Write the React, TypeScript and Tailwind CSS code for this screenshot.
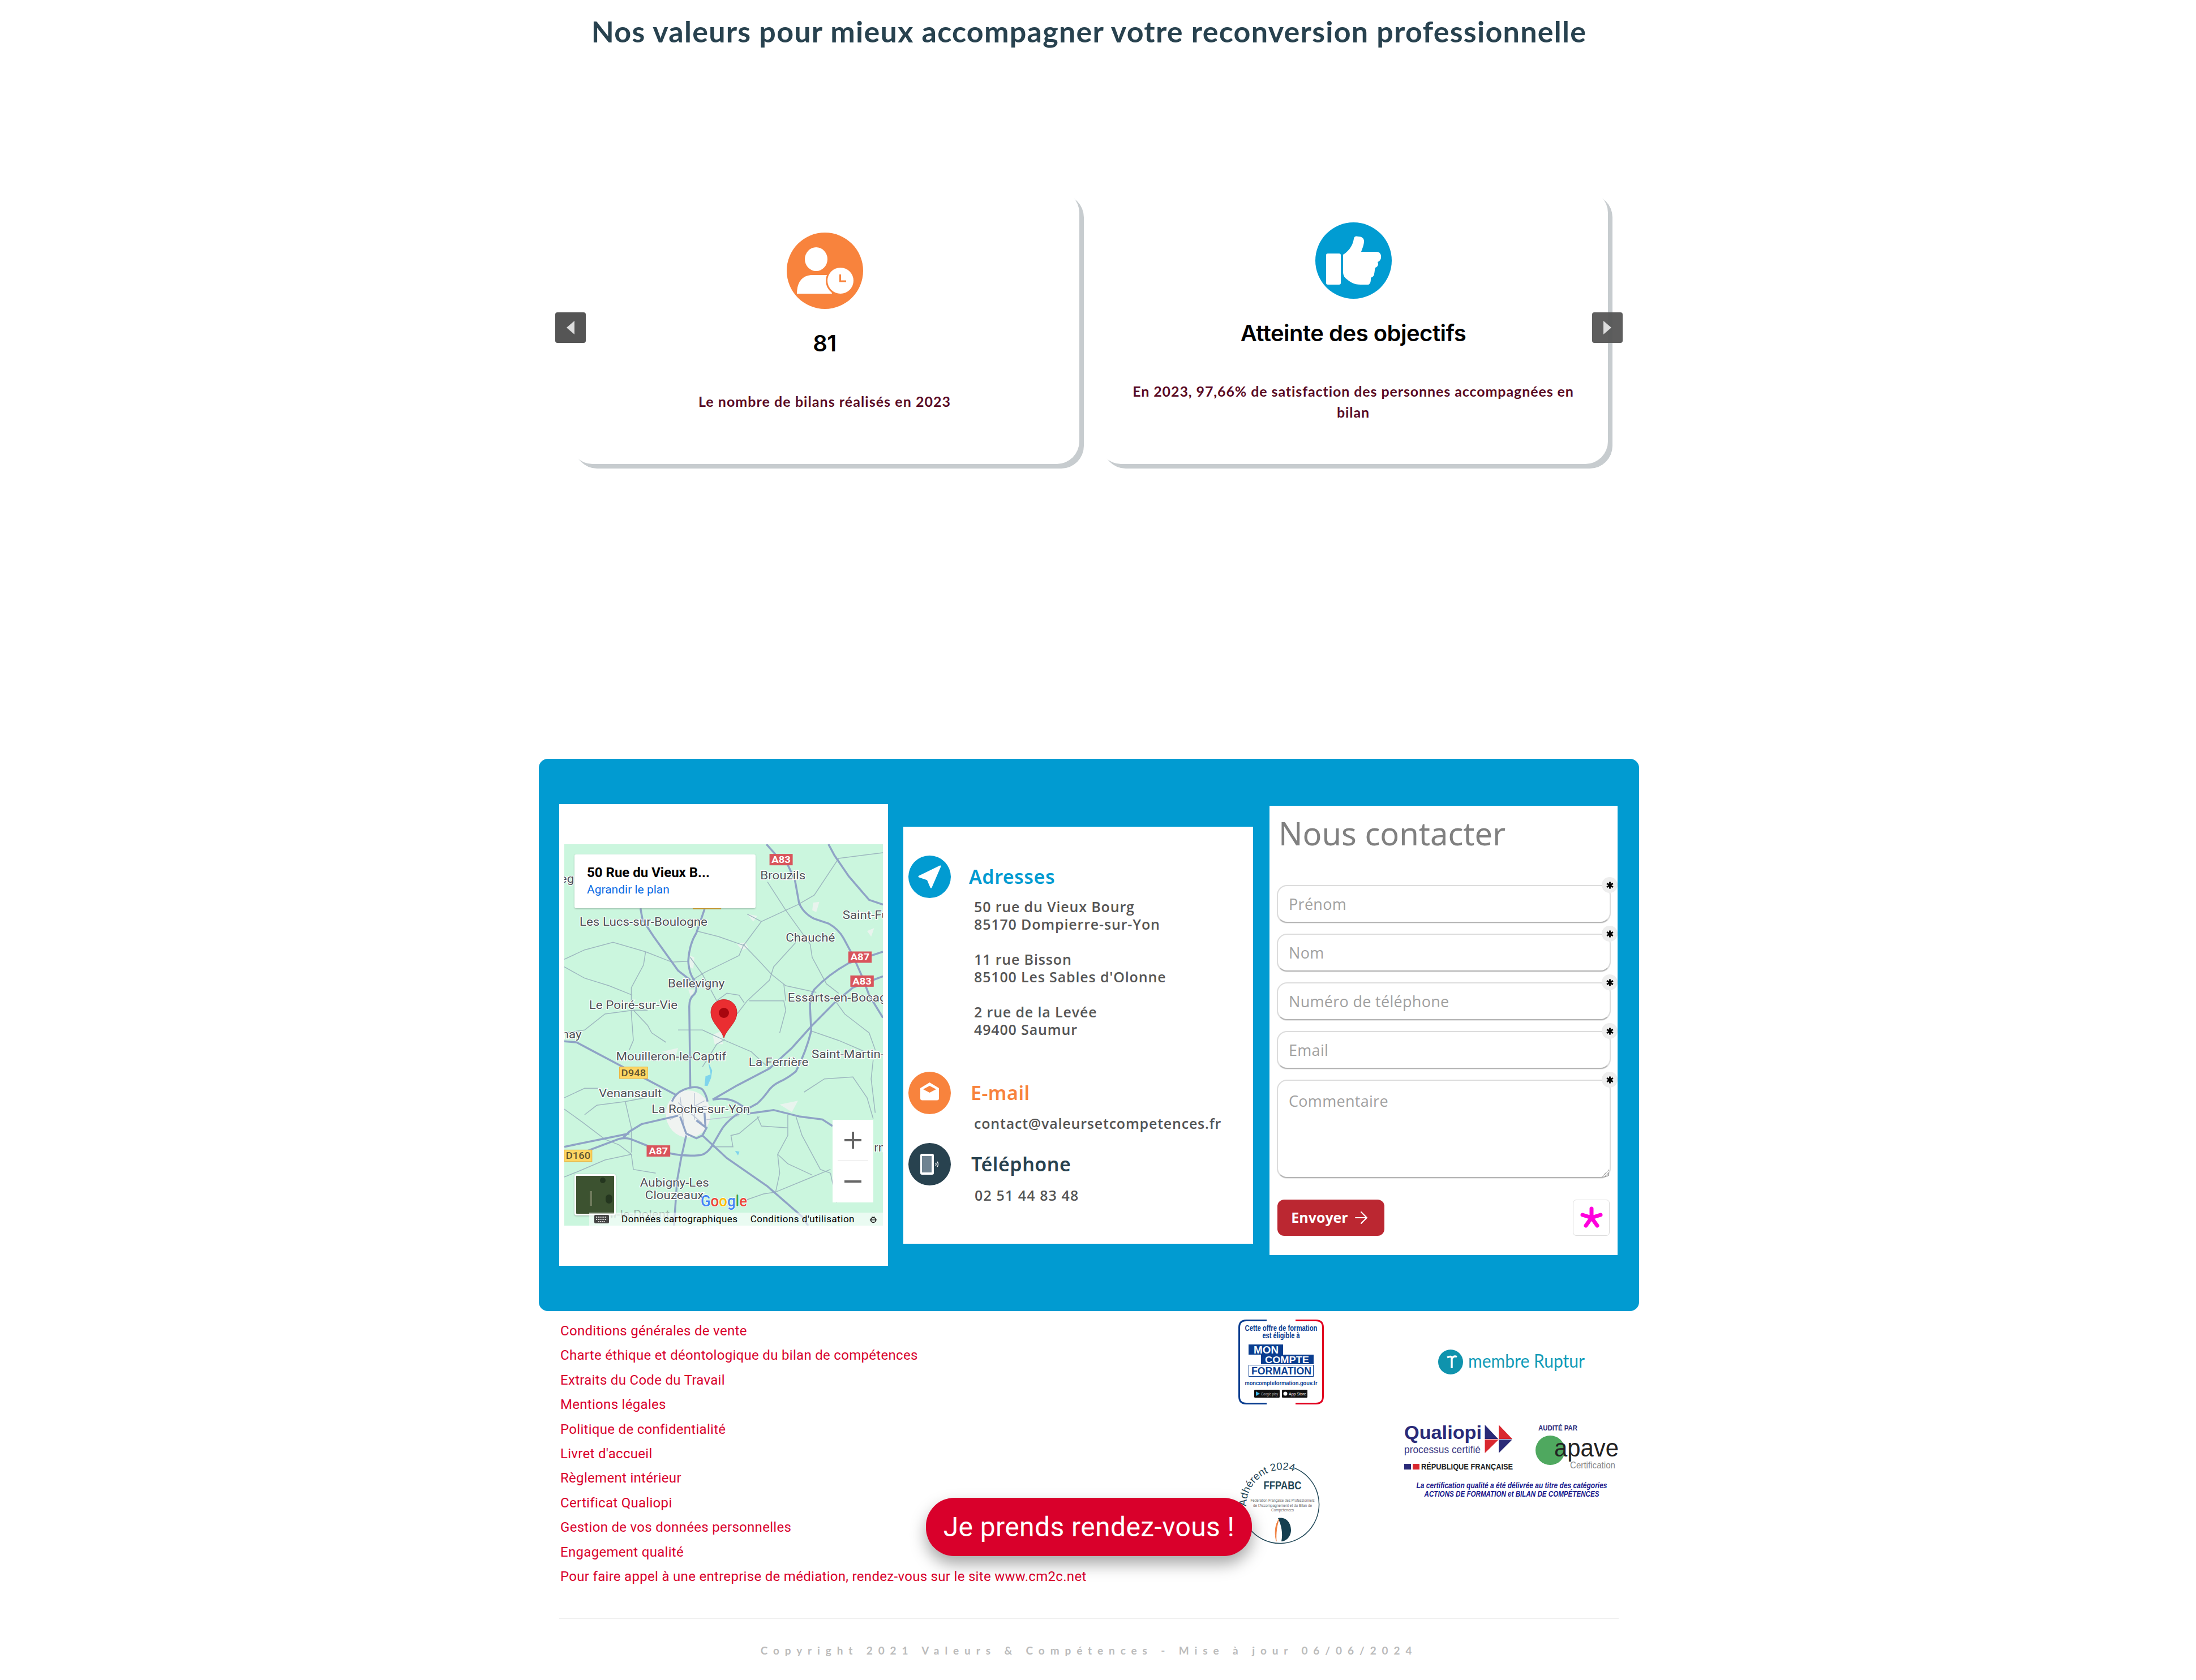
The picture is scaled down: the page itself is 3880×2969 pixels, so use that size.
import React from 'react'
import { ArrowRight } from 'lucide-react'

// road and label coordinates were read off map crops: 2.785 units per px across, 3 down
const majorRoads = [
  'M995 0 L1040 55 L1100 110 L1135 190 L1155 310 Q1175 365 1230 395 L1300 420 Q1350 450 1375 500 L1420 590 L1465 700 L1500 800 L1568 920',
  'M0 1045 L60 1050 L130 1090 L270 1170 L400 1244 L550 1329',
  'M690 345 L650 470 Q615 530 610 620 Q615 690 640 720 Q660 770 640 795 Q615 815 615 860 L620 1289',
  'M375 340 L385 400 L440 490 L560 670 L620 720',
  'M530 1364 Q545 1320 590 1300 Q650 1275 680 1300 Q700 1330 705 1364',
  'M1568 700 L1420 760 L1330 840 L1220 960 L1120 1080 L1010 1189 L850 1279 L730 1354',
  'M1568 570 L1400 630 Q1300 690 1230 770 Q1205 810 1210 880 L1215 990 Q1190 1100 1140 1204 Q1100 1240 1060 1259 Q1020 1280 1000 1314 Q975 1350 950 1374 L900 1404 L840 1439 Q790 1480 770 1520 L730 1594 Q700 1649 660 1649 Q590 1655 520 1639 L410 1599 L340 1569 Q310 1552 270 1562 L130 1619 L0 1674',
  'M900 1429 L1030 1409 L1160 1444 L1270 1459 L1320 1494',
  'M680 1544 L800 1664 L1000 1814 L1170 1974 L1200 2022',
  'M560 1439 L380 1484 L320 1524 L290 1556',
  'M600 1544 L575 1664 L555 1784 L540 2022',
  'M570 1444 L600 1534 L650 1559 L680 1544 L700 1504 L650 1464 M690 1424 L695 1504',
  'M320 1534 L0 1604 M730 1354 Q800 1340 850 1370 L900 1404',
  'M1300 0 L1330 60 L1400 170 L1500 295 L1568 320',
]

const thinRoads = [
  'M1150 320 L970 410 L880 540 L860 590 L690 680 L630 720 M970 410 L900 370',
  'M1568 45 L1350 75 L1230 270 L1150 320 M1000 200 L1090 350 L1210 530 L1220 600 L1290 740 L1350 790',
  'M1140 520 L1030 650 L1010 720 L900 830 L850 900 M880 530 L960 620 L1020 690 L1090 750 L1240 785',
  'M650 460 L760 490 L880 535 M0 650 L100 710 L220 750 L335 800 M0 610 L100 560 L240 520 L400 570 L530 625 L610 620',
  'M400 570 L390 640 L330 760 L330 900 L340 1040 L320 1090 M340 880 L410 960 L430 1000 L500 1050',
  'M0 1000 L100 985 L200 900 L340 880 L410 880 M560 985 L680 985 L790 1040 L920 1100 L1010 1190',
  'M790 1035 L750 1060 L710 1130 L680 1180 M750 830 L800 790 L860 800 L885 840 M750 830 L680 690 L620 600',
  'M910 830 L1080 830 L1090 880 L1060 1000 M1080 740 L1090 830 M1340 840 L1380 900 L1500 1000 L1530 1090 M1215 990 L1350 1040 L1480 1100',
  'M0 1344 L100 1294 L170 1294 M0 1404 L90 1474 L200 1564 L270 1594 L330 1644 L340 1724 L450 1744 M330 1644 L200 1674 L70 1734 L0 1764',
  'M300 1364 L330 1504 L330 1634 M100 1434 L160 1384 L300 1364 L400 1344 M1100 1434 L1100 1544 L1050 1644 L1060 1744 L1040 1844',
  'M1040 1844 L1220 1764 L1310 1724 M960 1444 L860 1534 L820 1544 L830 1604 L730 1604 M950 1444 L970 1494 L1100 1504',
  'M1140 1444 L1170 1544 L1260 1724 L1310 1744 M1050 1644 L1100 1694 L1220 1754 M1180 1314 L1280 1244 L1420 1234 L1490 1344 L1520 1454',
  'M1520 1144 L1510 1244 L1530 1424 M900 1884 L980 1854 L1040 1844 M1310 1744 L1340 1900',
]

const labels = [
  { t: 'eg', x: -20, y: 205 },
  { t: 'Brouzils', x: 965, y: 185 },
  { t: 'Saint-Fu', x: 1370, y: 395 },
  { t: 'Chauché', x: 1090, y: 515 },
  { t: 'Les Lucs-sur-Boulogne', x: 75, y: 432 },
  { t: 'Bellevigny', x: 510, y: 760 },
  { t: 'Le Poiré-sur-Vie', x: 122, y: 872 },
  { t: 'Essarts-en-Bocag', x: 1100, y: 835 },
  { t: 'nay', x: -12, y: 1030 },
  { t: 'Mouilleron-le-Captif', x: 255, y: 1145 },
  { t: 'La Ferrière', x: 908, y: 1175 },
  { t: 'Saint-Martin-d', x: 1218, y: 1133 },
  { t: 'Venansault', x: 170, y: 1342 },
  { t: 'La Roche-sur-Yon', x: 430, y: 1424 },
  { t: 'rn', x: 1525, y: 1629 },
  { t: 'Aubigny-Les', x: 373, y: 1816 },
  { t: 'Clouzeaux', x: 398, y: 1882 },
]

const shields = [
  { t: 'A83', x: 1012, y: 53, w: 111, h: 57, red: true },
  { t: 'A87', x: 1400, y: 570, w: 112, h: 57, red: true },
  { t: 'A83', x: 1410, y: 697, w: 112, h: 57, red: true },
  { t: 'A87', x: 407, y: 1598, w: 113, h: 57, red: true },
  { t: 'D948', x: 272, y: 1181, w: 138, h: 61, red: false },
  { t: 'D160', x: 0, y: 1621, w: 136, h: 61, red: false },
]

// logo lettering is narrower than the fonts we have, so squeeze glyphs instead of overlapping them
function T(props: React.SVGProps<SVGTextElement>): React.JSX.Element {
  return <text lengthAdjust="spacingAndGlyphs" {...props} />
}

function MapView(): React.JSX.Element {
  return (
    <div className="relative w-[563px] h-[674px] overflow-hidden bg-[#cbf6de] font-['Roboto',sans-serif]">
      <svg viewBox="0 0 1568 2022" preserveAspectRatio="none" className="absolute inset-0 w-full h-full">
        <ellipse cx="610" cy="1430" rx="110" ry="125" fill="#f0f3f1" />
        <path
          d="M620 590 L640 600 L635 660 L615 650 Z M1225 310 L1255 305 L1240 360 L1220 350 Z M610 770 L640 770 L625 815 Z M900 370 L950 380 L930 410 Z M730 1010 L775 990 L780 1060 L740 1060 Z M1490 460 L1525 445 L1510 490 Z M850 530 L890 520 L905 550 L875 560 Z M1060 1380 L1150 1360 L1120 1420 Z M480 1100 L560 1080 L550 1120 Z"
          fill="#e9f4ee"
        />
        {thinRoads.map((d) => (
          <path key={d} d={d} fill="none" stroke="#9db7bf" strokeWidth="1.5" vectorEffect="non-scaling-stroke" />
        ))}
        <path
          d="M530 1400 L700 1390 M570 1340 L590 1500 M640 1320 L640 1460 M520 1460 L690 1360 M560 1370 L680 1480 M700 1460 L860 1440"
          fill="none"
          stroke="#bcc6d6"
          strokeWidth="1.5"
          vectorEffect="non-scaling-stroke"
        />
        {majorRoads.map((d) => (
          <path key={d} d={d} fill="none" stroke="#8fa3c6" strokeWidth="3.5" vectorEffect="non-scaling-stroke" />
        ))}
        <path d="M708 1154 L720 1220 L695 1230 L690 1280 L705 1282 L722 1240 L728 1200 Z M840 1625 L862 1630 L855 1650 Z" fill="#7fd4ec" />
        <path d="M632 338 H772 V345 H632 Z" fill="#e8b23c" />
      </svg>

      {/* the map picture is a little wider than tall, labels get the same stretch */}
      <svg viewBox="0 0 503 674" preserveAspectRatio="none" className="absolute inset-0 w-full h-full">
        <text x={225 / 3.119} y={1982 / 3} fontSize="20" fill="#5a5f63" opacity="0.45">
          Il-le-Dolent
        </text>
        {labels.map((l) => (
          <text key={l.t} x={l.x / 3.119} y={l.y / 3} fontSize="20" fill="#4d5156" stroke="#ffffff" strokeWidth="2.5" paintOrder="stroke">
            {l.t}
          </text>
        ))}
        {shields.map((s) => (
          <g key={s.t + s.x}>
            <rect
              x={s.x / 3.119}
              y={s.y / 3}
              width={s.w / 3.119}
              height={s.h / 3}
              fill={s.red ? '#d9545c' : '#fdd663'}
              stroke={s.red ? '#d9545c' : '#eeb33a'}
            />
            <text
              x={(s.x + s.w / 2) / 3.119}
              y={s.y / 3 + s.h / 6 + 6}
              fontSize="16.5"
              fontWeight={s.red ? 700 : 500}
              textAnchor="middle"
              fill={s.red ? '#ffffff' : '#5f5330'}>
              {s.t}
            </text>
          </g>
        ))}
      </svg>

      <svg viewBox="0 0 563 674" className="absolute inset-0 w-full h-full">
        <path d="M282 342 C277 326 259 316 259 297 C259 284 269 274.5 282 274.5 C295 274.5 305 284 305 297 C305 316 287 326 282 342 Z" fill="#ea2e31" stroke="#c9242a" />
        <circle cx="282" cy="298" r="9" fill="#a8060e" />
        <T x="241" y="640" fontSize="27" fontWeight="500" stroke="#ffffff" strokeWidth="1.5" paintOrder="stroke" textLength="82">
          <tspan fill="#4285f4">G</tspan>
          <tspan fill="#ea4335">o</tspan>
          <tspan fill="#fbbc05">o</tspan>
          <tspan fill="#4285f4">g</tspan>
          <tspan fill="#34a853">l</tspan>
          <tspan fill="#ea4335">e</tspan>
        </T>
      </svg>

      <div className="absolute left-[18px] top-[18px] w-[320px] h-[95px] bg-white rounded-[3px] shadow-[0_1px_3px_rgba(0,0,0,0.25)] pl-[22px] pt-[17px]">
        <div className="text-[24px] leading-[30px] font-bold text-black whitespace-nowrap">50 Rue du Vieux B...</div>
        <div className="text-[21px] leading-[30px] text-[#0a6ce4] whitespace-nowrap">Agrandir le plan</div>
      </div>

      <div className="absolute left-[18px] top-[583px] w-[73px] h-[73px] rounded-[4px] border-[3px] border-white bg-[#3c5230] overflow-hidden shadow-[0_1px_3px_rgba(0,0,0,0.3)]">
        <div className="w-[10px] h-[10px] ml-[42px] mt-[3px] rounded-full bg-[#24361f]" />
        <div className="w-[4px] h-[26px] ml-[24px] mt-[14px] bg-[#6f7a5c]" />
        <div className="w-[12px] h-[16px] ml-[52px] -mt-[20px] rounded-full bg-[#24361f]" />
      </div>

      <div className="absolute left-[474px] top-[487px] w-[72px] h-[146px] bg-white flex flex-col items-center">
        <svg viewBox="0 0 72 72" className="w-[72px] h-[72px]">
          <path d="M21 36 H51 M36 21 V51" stroke="#666666" strokeWidth="4" />
        </svg>
        <div className="w-[54px] h-px bg-[#dddddd]" />
        <svg viewBox="0 0 72 72" className="w-[72px] h-[72px]">
          <path d="M21 36 H51" stroke="#666666" strokeWidth="4" />
        </svg>
      </div>

      <div className="absolute left-[44px] right-0 bottom-0 h-[23px] bg-white/60 flex items-center text-[17px] text-black">
        <svg viewBox="0 0 26 16" className="w-[26px] h-[16px] ml-[9px]">
          <rect width="26" height="15" rx="2" fill="#444444" />
          <path d="M3 4 H23 M3 8 H23 M7 12 H19" stroke="#ffffff" strokeWidth="1.6" strokeDasharray="2 1.2" />
        </svg>
        <span className="ml-[22px] whitespace-nowrap tracking-[0.5px]">Données cartographiques</span>
        <span className="ml-[22px] whitespace-nowrap tracking-[0.5px]">Conditions d'utilisation</span>
        <svg viewBox="0 0 16 16" className="w-[14px] h-[16px] ml-[26px]">
          <circle cx="8" cy="9" r="5" fill="none" stroke="#222222" strokeWidth="2" />
          <path d="M5 3 L8 5 L11 3 M1 9 H15 M6 9 H10" stroke="#222222" strokeWidth="1.5" />
        </svg>
      </div>
    </div>
  )
}

function PersonIcon(): React.JSX.Element {
  return (
    <svg viewBox="0 0 135 135" className="w-[135px] h-[135px]">
      <circle cx="67.5" cy="67.5" r="67.5" fill="#f8833d" />
      <ellipse cx="52" cy="47" rx="20" ry="21" fill="#ffffff" />
      <path d="M18 108 C18 88 27 75 46 75 H72 L80 108 Z" fill="#ffffff" />
      <circle cx="95" cy="85" r="26" fill="#f8833d" />
      <circle cx="95" cy="85" r="23" fill="#ffffff" />
      <path d="M94.5 74 V86 H105" fill="none" stroke="#f8833d" strokeWidth="3" />
    </svg>
  )
}

function ThumbIcon(): React.JSX.Element {
  return (
    <svg viewBox="0 0 135 135" className="w-[135px] h-[135px]">
      <circle cx="67.5" cy="67.5" r="67.5" fill="#019cd2" />
      <rect x="19" y="55" width="26" height="55" rx="3" fill="#ffffff" />
      <path
        d="M68 29 C69 24 72 24 76 25 C82 25 86 28 86 33 C86 40 83 46 81 52 H108 C114 52 117 57 116 62 C116 66 113 69 110 70 C112 74 111 78 106 80 C105 82 105 87 104 91 C104 95 100 97 98 98 C98 103 98 108 94 110 H80 C68 110 61 105 55 100 C50 96 49 92 49 86 V57 C58 52 66 42 68 29 Z"
        fill="#ffffff"
      />
    </svg>
  )
}

function ContactRow({ color, titleClass, title, gap, children }: {
  color: string
  titleClass: string
  title: string
  gap: string
  children: React.ReactNode
}): React.JSX.Element {
  return (
    <div className="flex items-center">
      <div className={`w-[75px] h-[75px] rounded-full shrink-0 ${color}`}>{children}</div>
      <h3 className={`font-['Noto_Sans',sans-serif] font-semibold text-[34px] leading-[40px] tracking-[0.5px] ${gap} ${titleClass}`}>{title}</h3>
    </div>
  )
}

function FormField({ placeholder, area }: { placeholder: string; area?: boolean }): React.JSX.Element {
  const fieldClass =
    "w-full rounded-[18px] border-2 border-[#dcdcdc] border-b-[#b5b5b5] bg-white pl-[19px] text-[27px] tracking-[0.3px] font-['Open_Sans',sans-serif] placeholder:text-[#a0a0a0] shadow-[0_1px_1px_rgba(0,0,0,0.1)] outline-none"
  return (
    <div className="relative w-[590px]">
      {area ? (
        <textarea placeholder={placeholder} className={`${fieldClass} block h-[174px] pt-[16px]`} />
      ) : (
        <input placeholder={placeholder} className={`${fieldClass} block h-[67px]`} />
      )}
      {area && (
        <svg viewBox="0 0 15 15" className="absolute right-[2px] bottom-[1px] w-[15px] h-[15px] pointer-events-none">
          <path d="M1 14 L14 1 M8 14 L14 8" stroke="#777777" strokeWidth="1" />
        </svg>
      )}
      <span className="absolute -right-[12px] -top-[14px] w-[28px] h-[28px] rounded-full bg-[#eeeeee] flex items-center justify-center">
        <svg viewBox="0 0 12 12" className="w-[13px] h-[13px]">
          <path d="M6 0.5 V11.5 M1 3 L11 9 M11 3 L1 9" stroke="#000000" strokeWidth="2.6" />
        </svg>
      </span>
    </div>
  )
}

function McfLogo(): React.JSX.Element {
  return (
    <svg viewBox="0 0 151 150" className="w-[151px] h-[150px] block font-['Liberation_Sans',sans-serif]">
      <path d="M50 1.5 H14 Q1.5 1.5 1.5 14 V136 Q1.5 148.5 14 148.5 H50" fill="none" stroke="#0a3d8f" strokeWidth="3" />
      <path d="M101 1.5 H137 Q149.5 1.5 149.5 14 V136 Q149.5 148.5 137 148.5 H101" fill="none" stroke="#e1001f" strokeWidth="3" />
      <T x="75.5" y="20" fontSize="14" fontWeight="700" fill="#0a3d8f" textAnchor="middle" textLength="128">Cette offre de formation</T>
      <T x="75.5" y="33" fontSize="14" fontWeight="700" fill="#0a3d8f" textAnchor="middle" textLength="66">est éligible à</T>
      <rect x="18" y="44" width="61" height="18" fill="#0a3d8f" />
      <rect x="40" y="62" width="93" height="17" fill="#0a3d8f" />
      <rect x="18.5" y="80.5" width="114" height="20" fill="none" stroke="#0a3d8f" />
      <T x="27" y="60" fontSize="18" fontWeight="700" fill="#ffffff" textLength="44">MON</T>
      <T x="47" y="77" fontSize="17" fontWeight="700" fill="#ffffff" textLength="78">COMPTE</T>
      <T x="23" y="97" fontSize="18" fontWeight="700" fill="#0a3d8f" textLength="106">FORMATION</T>
      <T x="75.5" y="116" fontSize="11" fontWeight="700" fill="#0a3d8f" textAnchor="middle" textLength="128">moncompteformation.gouv.fr</T>
      <rect x="28" y="124" width="45" height="14" rx="1.5" fill="#111111" />
      <rect x="77" y="124" width="45" height="14" rx="1.5" fill="#111111" />
      <path d="M31 127 L38 131 L31 135 Z" fill="#3db6e8" />
      <T x="40" y="134" fontSize="8" fill="#bbbbbb" textLength="30">Google play</T>
      <circle cx="83" cy="131" r="3.5" fill="#ffffff" />
      <T x="89" y="134" fontSize="8" fill="#ffffff" textLength="31">App Store</T>
    </svg>
  )
}

function FfpabcLogo(): React.JSX.Element {
  return (
    <svg viewBox="0 0 150 155" className="w-[150px] h-[155px] block overflow-visible font-['Liberation_Sans',sans-serif]">
      <path id="ffpabc-arc" d="M14 82 A64 64 0 0 1 96 20" fill="none" />
      <path d="M98 14 A69 69 0 1 1 20 122" fill="none" stroke="#1f4656" strokeWidth="1.5" />
      <text fontSize="18.5" fill="#1f4656">
        <textPath href="#ffpabc-arc">Adhérent 2024</textPath>
      </text>
      <T x="78" y="52" fontSize="21" fontWeight="700" fill="#1f4656" textAnchor="middle" textLength="67">FFPABC</T>
      <T x="78" y="74" fontSize="8" fill="#6a6a6a" textAnchor="middle" textLength="113">Fédération Française des Professionnels</T>
      <T x="78" y="83" fontSize="8" fill="#6a6a6a" textAnchor="middle" textLength="104">de l'Accompagnement et du Bilan de</T>
      <T x="78" y="91" fontSize="8" fill="#6a6a6a" textAnchor="middle" textLength="40">Compétences</T>
      <path d="M70 103 C85 100 93 112 93 124 C93 135 85 144 76 144 C79 130 76 115 70 103 Z" fill="#153f50" />
      <path d="M72 104 C64 116 64 130 67 144 C66 128 68 116 72 104 Z" fill="#f08040" stroke="#f08040" />
    </svg>
  )
}

function CertLogos(): React.JSX.Element {
  return (
    <svg viewBox="0 0 380 140" className="w-[380px] h-[140px] block font-['Liberation_Sans',sans-serif]">
      <T x="0" y="28" fontSize="34" fontWeight="700" fill="#2a2a78" textLength="137">Qualiopi</T>
      <path d="M142.5 3 L166 28 H142.5 Z" fill="#2a2a78" />
      <path d="M167 3 L191 28 H167 Z" fill="#d9282f" />
      <path d="M142.5 29 H167 L142.5 53 Z" fill="#d9282f" />
      <path d="M167 29 H191 L167 53 Z" fill="#2a2a78" />
      <T x="0" y="53" fontSize="18" fill="#3a3a84" textLength="135">processus certifié</T>
      <rect x="0" y="72" width="12" height="10" fill="#2a2a78" />
      <rect x="15" y="72" width="12" height="10" fill="#d9282f" />
      <T x="30" y="82" fontSize="15" fontWeight="700" fill="#222222" textLength="162">RÉPUBLIQUE FRANÇAISE</T>
      <T x="237" y="13" fontSize="12" fontWeight="700" fill="#2a2a78" textLength="69">AUDITÉ PAR</T>
      <circle cx="258" cy="48" r="26" fill="#4fa85f" />
      <T x="265" y="59" fontSize="44" fill="#222222" textLength="114">apave</T>
      <T x="293" y="80" fontSize="17" fill="#8a8a8a" textLength="80">Certification</T>
      <T x="190" y="115" fontSize="14" fontWeight="700" fontStyle="italic" fill="#1a1a8c" textAnchor="middle" textLength="337">La certification qualité a été délivrée au titre des catégories</T>
      <T x="190" y="130" fontSize="14" fontWeight="700" fontStyle="italic" fill="#1a1a8c" textAnchor="middle" textLength="309">ACTIONS DE FORMATION et BILAN DE COMPÉTENCES</T>
    </svg>
  )
}

const footerLinks = [
  'Conditions générales de vente',
  'Charte éthique et déontologique du bilan de compétences',
  'Extraits du Code du Travail',
  'Mentions légales',
  'Politique de confidentialité',
  "Livret d'accueil",
  'Règlement intérieur',
  'Certificat Qualiopi',
  'Gestion de vos données personnelles',
  'Engagement qualité',
  'Pour faire appel à une entreprise de médiation, rendez-vous sur le site www.cm2c.net',
]

function App(): React.JSX.Element {
  return (
    <div className="relative w-[3880px] h-[2969px] bg-white overflow-hidden">
      <div className="ml-[952px] w-[1944px]">
        <h2 className="h-[110px] flex items-center justify-center text-[52px] font-['Lato',sans-serif] font-bold tracking-[1.26px] text-[#28424f] whitespace-nowrap">
          Nos valeurs pour mieux accompagner votre reconversion professionnelle
        </h2>

        <section className="relative mt-[226px] h-[492px] pl-[55px] flex gap-[34px] items-start">
          <article className="w-[900px] h-[484px] rounded-[40px] bg-white shadow-[8px_8px_0_#c7cccf] flex flex-col items-center justify-center pb-[17px]">
            <PersonIcon />
            <h3 className="mt-[39px] text-[40px] leading-[44px] font-['Inter',sans-serif] font-semibold tracking-[-0.5px] text-black">81</h3>
            <p className="mt-[62px] text-[25px] leading-[37px] font-['Lato',sans-serif] font-bold tracking-[1.05px] text-[#5a0a24]">
              Le nombre de bilans réalisés en 2023
            </p>
          </article>
          <article className="w-[900px] h-[484px] rounded-[40px] bg-white shadow-[8px_8px_0_#c7cccf] flex flex-col items-center justify-center pb-[17px]">
            <ThumbIcon />
            <h3 className="mt-[39px] text-[40px] leading-[44px] font-['Inter',sans-serif] font-semibold tracking-[-0.5px] text-black">Atteinte des objectifs</h3>
            <p className="mt-[62px] w-[800px] text-center text-[25px] leading-[37px] font-['Lato',sans-serif] font-bold tracking-[0.9px] text-[#5a0a24]">
              En 2023, 97,66% de satisfaction des personnes accompagnées en bilan
            </p>
          </article>
          <button className="absolute left-[29px] top-[216px] w-[54px] h-[54px] rounded-[4px] bg-[#555555] flex items-center justify-center">
            <svg viewBox="0 0 14 24" className="w-[14px] h-[24px]">
              <path d="M14 0 V24 L0 12 Z" fill="#dddddd" />
            </svg>
          </button>
          <button className="absolute left-[1861px] top-[216px] w-[54px] h-[54px] rounded-[4px] bg-[#555555]/95 flex items-center justify-center">
            <svg viewBox="0 0 14 24" className="w-[14px] h-[24px]">
              <path d="M0 0 V24 L14 12 Z" fill="#dddddd" />
            </svg>
          </button>
        </section>

        <section className="mt-[513px] h-[976px] rounded-[16px] bg-[#019bd1] pl-[36px] flex items-center">
          <div className="w-[581px] h-[816px] bg-white pl-[9px] pt-[71px]">
            <MapView />
          </div>

          <div className="ml-[27px] w-[618px] h-[737px] bg-white pl-[9px] pt-[51px]">
            <ContactRow color="bg-[#019bd1]" titleClass="text-[#019bd1]" title="Adresses" gap="ml-[32px]">
              <svg viewBox="0 0 75 75" className="w-[75px] h-[75px]">
                <path d="M56 19 L19 37 L34 42 L40 56 Z" fill="#ffffff" stroke="#ffffff" strokeWidth="3" strokeLinejoin="round" />
              </svg>
            </ContactRow>
            <address className="pl-[116px] not-italic text-[25px] leading-[31px] font-['Open_Sans',sans-serif] font-semibold tracking-[0.85px] text-[#555555]">
              50 rue du Vieux Bourg
              <br />
              85170 Dompierre-sur-Yon
              <br />
              <br />
              11 rue Bisson
              <br />
              85100 Les Sables d'Olonne
              <br />
              <br />
              2 rue de la Levée
              <br />
              49400 Saumur
            </address>

            <div className="mt-[59px]">
              <ContactRow color="bg-[#f8833d]" titleClass="text-[#f8833d]" title="E-mail" gap="ml-[35px]">
                <svg viewBox="0 0 75 75" className="w-[75px] h-[75px]">
                  <path d="M21 29 L37.5 19 L54 29 V47 Q54 50.5 50.5 50.5 H24.5 Q21 50.5 21 47 Z" fill="#ffffff" />
                  <path d="M26 31 L37.5 25 L49 31 L37.5 37 Z" fill="#f8833d" />
                </svg>
              </ContactRow>
            </div>
            <p className="mt-[1px] pl-[116px] text-[25px] leading-[31px] font-['Open_Sans',sans-serif] font-semibold tracking-[0.8px] text-[#555555]">
              contact@valeursetcompetences.fr
            </p>

            <div className="mt-[19px]">
              <ContactRow color="bg-[#28424f]" titleClass="text-[#28424f]" title="Téléphone" gap="ml-[36px]">
                <svg viewBox="0 0 75 75" className="w-[75px] h-[75px]">
                  <rect x="21" y="19" width="24" height="37" rx="3" fill="#ffffff" />
                  <rect x="24" y="23" width="17" height="29" fill="#6f8391" />
                  <path d="M48 35 Q50 37.5 48 40 M51 33 Q54 37.5 51 42" fill="none" stroke="#ffffff" strokeWidth="1.5" />
                </svg>
              </ContactRow>
            </div>
            <p className="mt-[2px] pl-[117px] text-[25px] leading-[31px] font-['Open_Sans',sans-serif] font-semibold tracking-[1.1px] text-[#555555]">
              02 51 44 83 48
            </p>
          </div>

          <form className="ml-[29px] mb-[16px] w-[615px] h-[794px] bg-white pl-[13px] pt-[12px]">
            <h2 className="pl-[3px] text-[56px] leading-[72px] font-['Noto_Sans',sans-serif] text-[#808080] whitespace-nowrap">Nous contacter</h2>
            <div className="mt-[56px] flex flex-col gap-[19px]">
              <FormField placeholder="Prénom" />
              <FormField placeholder="Nom" />
              <FormField placeholder="Numéro de téléphone" />
              <FormField placeholder="Email" />
              <FormField placeholder="Commentaire" area />
            </div>
            <div className="mt-[38px] w-[588px] pl-[1px] flex items-start justify-between">
              <button type="button" className="w-[189px] h-[64px] rounded-[12px] bg-[#bb2731] text-white flex items-center justify-center gap-[6px] text-[25px] font-bold font-['Open_Sans',sans-serif]">
                Envoyer
                <ArrowRight size={34} strokeWidth={1.5} />
              </button>
              <div className="w-[65px] h-[64px] rounded-[6px] border border-[#dddddd] flex items-center justify-center">
                <svg viewBox="0 0 40 40" className="w-[40px] h-[40px]">
                  <path d="M20 20 V4 M20 20 L36 15 M20 20 L30 34 M20 20 L10 34 M20 20 L4 15" stroke="#ff00dd" strokeWidth="7" strokeLinecap="round" />
                </svg>
              </div>
            </div>
          </form>
        </section>

        <footer className="h-[543px] flex">
          <ul className="w-[1236px] pl-[38px] pt-[14px] text-[24px] leading-[43.4px] tracking-[0.3px] font-['Roboto',sans-serif] text-[#d9002c] whitespace-nowrap">
            {footerLinks.map((link) => (
              <li key={link}>{link}</li>
            ))}
          </ul>
          <div className="w-[293px] pt-[15px]">
            <McfLogo />
            <div className="mt-[98px]">
              <FfpabcLogo />
            </div>
          </div>
          <div className="pt-[68px]">
            <svg viewBox="0 0 320 44" className="w-[320px] h-[44px] ml-[60px] block">
              <circle cx="22" cy="22" r="22" fill="#0f93ad" />
              <path d="M16 14 Q24 10 24 16 V33 M24 16 Q28 10 33 13" fill="none" stroke="#ffffff" strokeWidth="3.5" />
              <T x="53" y="32" fontSize="32" fontFamily="'Lato', sans-serif" fill="#0f9bb8" textLength="206">membre Ruptur</T>
            </svg>
            <div className="mt-[86px]">
              <CertLogos />
            </div>
          </div>
        </footer>

        <div className="ml-[36px] w-[1872px] border-t border-[#eeeeee] pt-[43px] text-center text-[19px] leading-[26px] font-['Lato',sans-serif] font-bold tracking-[9.9px] text-[#bbbbbb] whitespace-nowrap">
          Copyright 2021 Valeurs & Compétences - Mise à jour 06/06/2024
        </div>
      </div>

      <a href="#" className="absolute left-[1636px] top-[2647px] w-[576px] h-[103px] rounded-[50px] bg-[#d9002b] shadow-[0_14px_28px_rgba(0,0,0,0.35)] flex items-center justify-center text-[48px] tracking-[0.4px] text-white font-['Roboto',sans-serif] whitespace-nowrap">
        Je prends rendez-vous !
      </a>
    </div>
  )
}

export default App
